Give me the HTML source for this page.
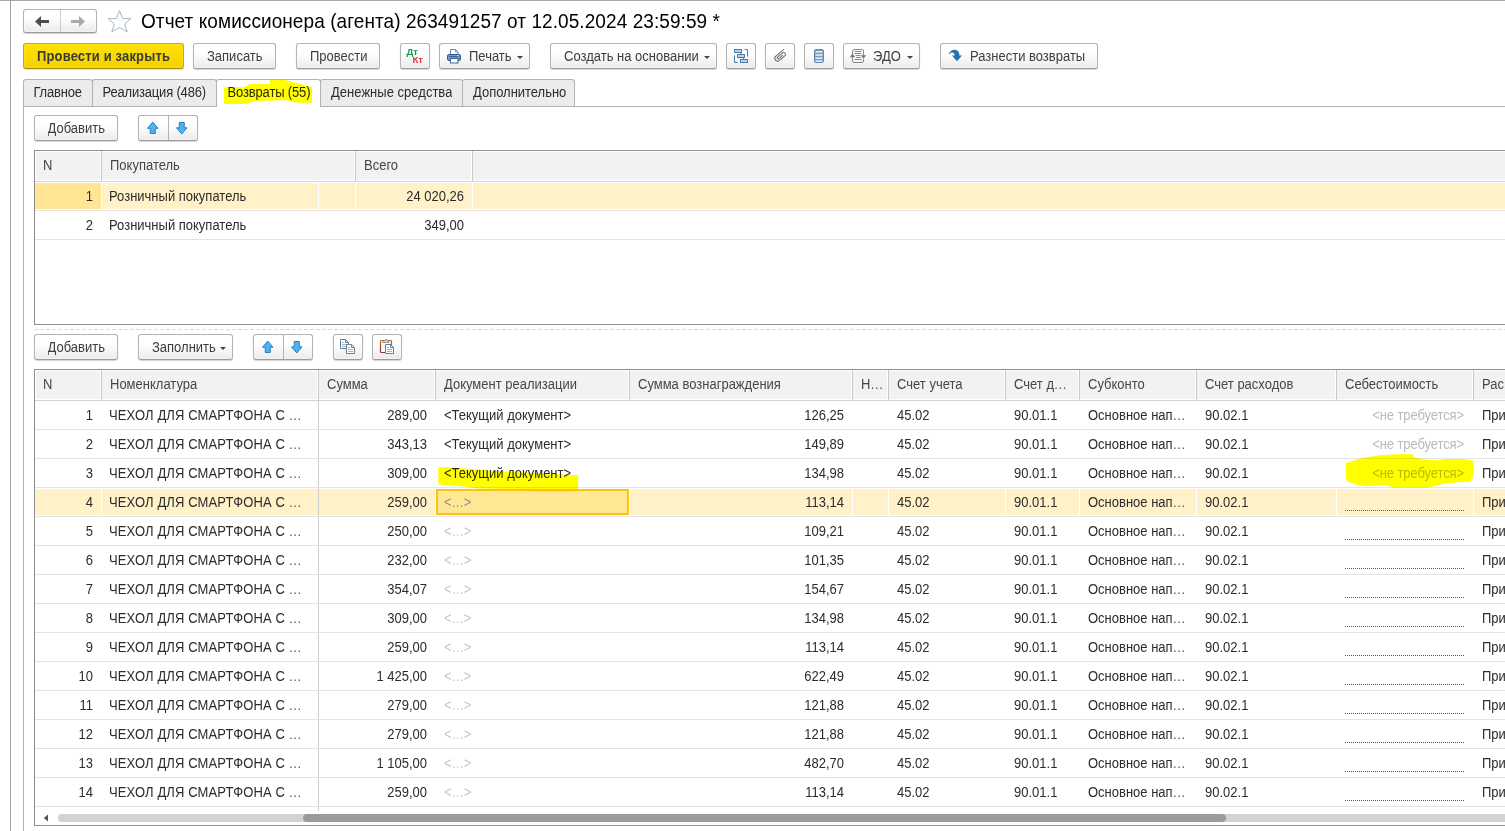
<!DOCTYPE html><html lang="ru"><head><meta charset="utf-8"><title>Отчет комиссионера (агента)</title><style>
*{box-sizing:border-box;margin:0;padding:0}
html,body{width:1505px;height:831px;overflow:hidden;background:#fff}
body{position:relative;font-family:"Liberation Sans",sans-serif;font-size:13px;color:#333}
.a{position:absolute}
.t{position:absolute;white-space:nowrap;line-height:15px;height:15px;font-size:13px;transform:scaleY(1.075);transform-origin:0 12px;color:#2c2c2c;overflow:hidden}
.t.r{text-align:right}
.d{letter-spacing:0.6px;margin-left:0.4px;color:#555}
.t.g{color:#bababa}
.t.b{color:#3e3e3e}
.btn{position:absolute;height:26px;border:1px solid #b3b3b3;border-bottom-color:#9b9b9b;border-radius:3px;background:linear-gradient(#ffffff 35%,#ebebeb 100%);box-shadow:0 1px 1px rgba(0,0,0,.18),inset 0 0 0 1px rgba(255,255,255,.4)}
.btn.y{background:linear-gradient(#ffe200,#f3d200);border-color:#c9ab00;border-bottom-color:#a88e00;box-shadow:0 1px 1px rgba(0,0,0,.13),inset 0 0 0 1px rgba(255,255,255,.12)}
.ic{position:absolute;overflow:visible}
.tab{position:absolute;top:79px;height:28px;border:1px solid #b2b2b2;border-bottom:none;border-radius:3px 3px 0 0;background:#ececec}
.tab.act{background:#fff;z-index:3}
.hl{position:absolute;left:0;top:0;mix-blend-mode:multiply;z-index:20;pointer-events:none}
.hc{position:absolute;background:#f2f2f2;height:28px}
.vl{position:absolute;width:1px;background:#c9c9c9}
.hr{position:absolute;height:1px;background:#e4e4e4}
.sel{position:absolute;height:26px;background:#fff2c8}
.dot{position:absolute;height:1px;background:repeating-linear-gradient(90deg,#f01818 0,#f01818 1px,transparent 1px,transparent 2px)}
</style></head><body>
<div class="a" style="left:0;top:0;width:1505px;height:1px;background:#a6a6a6"></div>
<div class="a" style="left:10px;top:0;width:1px;height:831px;background:#a0a0a0"></div>
<div class="btn" style="left:23px;top:9px;width:74px;height:24px"></div>
<div class="a" style="left:60px;top:10px;width:1px;height:22px;background:#cdcdcd"></div>
<svg class="ic" style="left:23px;top:9px" width="74" height="24" viewBox="0 0 74 24"><path d="M12 12.5 L18 7 V11 H26 V14 H18 V18 Z" fill="#4d4d4d"/><path d="M62 12.5 L56 7 V11 H48 V14 H56 V18 Z" fill="#a9a9a9"/></svg>
<svg class="ic" style="left:0;top:0" width="140" height="40" viewBox="0 0 140 40"><polygon points="119.5,10.6 122.6,18.6 130.8,18.6 124.6,24.0 127.2,31.8 119.5,27.4 111.8,31.8 114.4,24.0 108.2,18.6 116.4,18.6" fill="#fff" stroke="#a9b5c1" stroke-width="1"/></svg>
<div class="a" style="left:141px;top:10px;font-size:19px;line-height:24px;height:24px;color:#000;white-space:nowrap;letter-spacing:0.075px;transform:scaleY(1.07);transform-origin:0 21px">Отчет комиссионера (агента) 263491257 от 12.05.2024 23:59:59 *</div>
<div class="btn y" style="left:23px;top:43px;width:161px;height:26px"></div>
<div class="t " style="left:37px;top:49px;font-weight:bold;color:#3a3a3a;letter-spacing:0.15px">Провести и закрыть</div>
<div class="btn " style="left:193px;top:43px;width:83px;height:26px"></div>
<div class="t b" style="left:207px;top:49px;">Записать</div>
<div class="btn " style="left:296px;top:43px;width:84px;height:26px"></div>
<div class="t b" style="left:310px;top:49px;">Провести</div>
<div class="btn " style="left:400px;top:43px;width:30px;height:26px"></div>
<div class="a" style="left:406.5px;top:47px;font-size:9.5px;font-weight:bold;color:#0f9a48;line-height:10px">Дт</div>
<div class="a" style="left:412.5px;top:55px;font-size:9.5px;font-weight:bold;color:#e03540;line-height:10px">Кт</div>
<div class="btn " style="left:439px;top:43px;width:91px;height:26px"></div>
<div class="t b" style="left:469px;top:49px;">Печать</div>
<svg class="ic" style="left:517px;top:56px" width="6" height="3" viewBox="0 0 6 3"><path d="M0 0H6L3 3Z" fill="#444"/></svg>
<div class="btn " style="left:550px;top:43px;width:167px;height:26px"></div>
<div class="t b" style="left:564px;top:49px;">Создать на основании</div>
<svg class="ic" style="left:704px;top:56px" width="6" height="3" viewBox="0 0 6 3"><path d="M0 0H6L3 3Z" fill="#444"/></svg>
<div class="btn " style="left:726px;top:43px;width:30px;height:26px"></div>
<div class="btn " style="left:765px;top:43px;width:30px;height:26px"></div>
<div class="btn " style="left:804px;top:43px;width:30px;height:26px"></div>
<div class="btn " style="left:843px;top:43px;width:77px;height:26px"></div>
<div class="t b" style="left:873px;top:49px;">ЭДО</div>
<svg class="ic" style="left:907px;top:56px" width="6" height="3" viewBox="0 0 6 3"><path d="M0 0H6L3 3Z" fill="#444"/></svg>
<div class="btn " style="left:940px;top:43px;width:158px;height:26px"></div>
<div class="t b" style="left:970px;top:49px;">Разнести возвраты</div>
<svg class="ic" style="left:0;top:0" width="1505" height="80" viewBox="0 0 1505 80"><path d="M450.5 54.5V49.5H455.5L458 52V54.5" fill="#fff" stroke="#6a86a6" stroke-width="1"/><path d="M455.5 49.5V52H458" fill="none" stroke="#6a86a6" stroke-width="0.8"/><rect x="447.5" y="54.5" width="13" height="6" rx="1.5" fill="#6f98c6" stroke="#2d5a8c" stroke-width="1"/><rect x="449" y="56" width="10" height="1" fill="#3a6494"/><rect x="457" y="55.2" width="1.6" height="1" fill="#e8f0fa"/><rect x="450.5" y="58.5" width="7.5" height="4.5" fill="#fff" stroke="#3f6896" stroke-width="1"/><g fill="#bcd2e8" stroke="#4581b3" stroke-width="1"><rect x="734.5" y="49.5" width="7" height="3"/><rect x="737.5" y="54.5" width="7" height="3"/><rect x="740.5" y="59.5" width="7" height="3"/></g><g fill="none" stroke="#4581b3" stroke-width="1"><path d="M740.5 52.5V54.5M743.5 57.5V59.5M744.5 49.5H747.5V56.5M734.5 55.5V62.5H737.5"/></g><g transform="translate(780.4,56) rotate(50)" fill="none" stroke="#6a6a6a" stroke-width="1" stroke-linecap="round"><path d="M-2.8 -6.6 V3.6 a2.8 2.8 0 0 0 5.6 0 V-3.4 a1.9 1.9 0 0 0 -3.8 0 V3 a0.95 0.95 0 0 0 1.9 0 V-2.2"/></g><rect x="814.5" y="49.5" width="9" height="13" rx="1.5" fill="#7a9ec2" stroke="#5f89b0" stroke-width="1"/><rect x="815.5" y="51" width="7" height="1.6" fill="#e1ecf7"/><rect x="815.5" y="54.2" width="7" height="1.6" fill="#e1ecf7"/><rect x="815.5" y="57.4" width="7" height="1.6" fill="#e1ecf7"/><rect x="815.5" y="60.4" width="7" height="1.6" fill="#e1ecf7"/><g fill="none" stroke="#8a8a8a" stroke-width="1"><path d="M852.5 55V51a1.5 1.5 0 0 1 1.5 -1.5H862a1.5 1.5 0 0 1 1.5 1.5V56"/><path d="M863.5 59V61a1.5 1.5 0 0 1 -1.5 1.5H854a1.5 1.5 0 0 1 -1.5 -1.5V56.5"/><path d="M854.5 51.5H861.5M854.5 53.5H861.5M855.5 55.5H860.5M856 57.5H861M854.5 59.5H861.5"/></g><path d="M849.7 57.3L852.5 53.7L855.3 57.3Z" fill="#777"/><path d="M860.7 55.2L863.5 58.8L866.3 55.2Z" fill="#777"/><path transform="translate(948,49)" d="M0.8 5 C1.5 2.5 4 0.8 6.5 0.8 C9.5 0.8 11.6 3 11.4 6.4 H14 L9 12.2 L4 6.4 H6.7 C6.6 4.5 5.3 3.3 3.8 3.4 C2.8 3.5 2 4.2 1.4 5.3 Z" fill="#2571b2"/></svg>
<div class="a" style="left:23px;top:106px;width:1482px;height:1px;background:#b2b2b2;z-index:2"></div>
<div class="a" style="left:23px;top:106px;width:1px;height:725px;background:#b2b2b2"></div>
<div class="tab" style="left:23px;width:70px"></div>
<div class="t " style="left:33.5px;top:85px;z-index:4;letter-spacing:-0.19px">Главное</div>
<div class="tab" style="left:92px;width:125px"></div>
<div class="t " style="left:102.6px;top:85px;z-index:4;letter-spacing:-0.19px">Реализация (486)</div>
<div class="tab act" style="left:216px;width:105px"></div>
<div class="t " style="left:227.5px;top:85px;z-index:4;letter-spacing:-0.15px">Возвраты (55)</div>
<div class="tab" style="left:320px;width:143px"></div>
<div class="t " style="left:331px;top:85px;z-index:4;letter-spacing:0.02px">Денежные средства</div>
<div class="tab" style="left:462px;width:113px"></div>
<div class="t " style="left:473px;top:85px;z-index:4;letter-spacing:-0.02px">Дополнительно</div>
<div class="btn " style="left:34px;top:115px;width:84px;height:26px"></div>
<div class="t b" style="left:47.5px;top:121px;">Добавить</div>
<div class="btn " style="left:138px;top:115px;width:60px;height:26px"></div>
<div class="a" style="left:168px;top:116px;width:1px;height:24px;background:#b3b3b3"></div>
<svg class="ic" style="left:147px;top:121px" width="12" height="14" viewBox="0 0 12 14"><path d="M5.75 1 L11 7.3 H8.25 V12.5 H3.25 V7.3 H0.5 Z" fill="#4db3ef" stroke="#2a7fbc" stroke-width="1" stroke-linejoin="miter"/></svg>
<svg class="ic" style="left:176px;top:121px" width="12" height="14" viewBox="0 0 12 14"><path d="M5.75 13 L11 6.8 H8.25 V1.5 H3.25 V6.8 H0.5 Z" fill="#4db3ef" stroke="#2a7fbc" stroke-width="1" stroke-linejoin="miter"/></svg>
<div class="a" style="left:34px;top:150px;width:1471px;height:175px;border:1px solid #8f8f8f;border-right:none"></div>
<div class="hc" style="left:36px;top:152px;width:64px"></div>
<div class="t " style="left:43px;top:158px;width:56px;color:#474747">N</div>
<div class="hc" style="left:102px;top:152px;width:252px"></div>
<div class="vl" style="left:101px;top:151px;height:30px"></div>
<div class="t " style="left:110px;top:158px;width:244px;color:#474747">Покупатель</div>
<div class="hc" style="left:356px;top:152px;width:115px"></div>
<div class="vl" style="left:355px;top:151px;height:30px"></div>
<div class="t " style="left:364px;top:158px;width:107px;color:#474747">Всего</div>
<div class="hc" style="left:473px;top:152px;width:1036px"></div>
<div class="vl" style="left:472px;top:151px;height:30px"></div>
<div class="t " style="left:481px;top:158px;width:1028px;color:#474747"></div>
<div class="hr" style="left:35px;top:181px;width:1470px;background:#d2d2d2"></div>
<div class="sel" style="left:35px;top:183px;width:66px;background:#ffe594"></div>
<div class="sel" style="left:102px;top:183px;width:216px;background:#fff2c8"></div>
<div class="sel" style="left:319px;top:183px;width:36px;background:#fff2c8"></div>
<div class="sel" style="left:356px;top:183px;width:116px;background:#fff2c8"></div>
<div class="sel" style="left:473px;top:183px;width:1032px;background:#fff2c8"></div>
<div class="hr" style="left:35px;top:210px;width:1470px"></div>
<div class="hr" style="left:35px;top:239px;width:1470px"></div>
<div class="t r" style="left:35px;top:189px;width:58px;">1</div>
<div class="t " style="left:109px;top:189px;">Розничный покупатель</div>
<div class="t r" style="left:356px;top:189px;width:108px;">24 020,26</div>
<div class="t r" style="left:35px;top:218px;width:58px;">2</div>
<div class="t " style="left:109px;top:218px;">Розничный покупатель</div>
<div class="t r" style="left:356px;top:218px;width:108px;">349,00</div>
<div class="a" style="left:34px;top:329px;width:1471px;height:1px;background:repeating-linear-gradient(90deg,#d9d9d9 0,#d9d9d9 4px,transparent 4px,transparent 6px)"></div>
<div class="btn " style="left:34px;top:334px;width:84px;height:26px"></div>
<div class="t b" style="left:47.5px;top:340px;">Добавить</div>
<div class="btn " style="left:138px;top:334px;width:95px;height:26px"></div>
<div class="t b" style="left:152px;top:340px;">Заполнить</div>
<svg class="ic" style="left:220px;top:347px" width="6" height="3" viewBox="0 0 6 3"><path d="M0 0H6L3 3Z" fill="#444"/></svg>
<div class="btn " style="left:253px;top:334px;width:60px;height:26px"></div>
<div class="a" style="left:283px;top:335px;width:1px;height:24px;background:#b3b3b3"></div>
<svg class="ic" style="left:262px;top:340px" width="12" height="14" viewBox="0 0 12 14"><path d="M5.75 1 L11 7.3 H8.25 V12.5 H3.25 V7.3 H0.5 Z" fill="#4db3ef" stroke="#2a7fbc" stroke-width="1" stroke-linejoin="miter"/></svg>
<svg class="ic" style="left:291px;top:340px" width="12" height="14" viewBox="0 0 12 14"><path d="M5.75 13 L11 6.8 H8.25 V1.5 H3.25 V6.8 H0.5 Z" fill="#4db3ef" stroke="#2a7fbc" stroke-width="1" stroke-linejoin="miter"/></svg>
<div class="btn " style="left:333px;top:334px;width:30px;height:26px"></div>
<div class="btn " style="left:372px;top:334px;width:30px;height:26px"></div>
<svg class="ic" style="left:0;top:300px" width="420" height="70" viewBox="0 300 420 70"><path d="M340.5 339.5H345.5L348.5 342.5V348.5H340.5Z" fill="#fff" stroke="#6a8099" stroke-width="1"/><path d="M345.5 339.5V342.5H348.5" fill="none" stroke="#6a8099" stroke-width="1"/><path d="M342 342.5H344M342 344.5H347M342 346.5H347" stroke="#a3b4c6" stroke-width="1" fill="none"/><path d="M346.5 344.5H351.5L354.5 347.5V353.5H346.5Z" fill="#fff" stroke="#6a8099" stroke-width="1"/><path d="M351.5 344.5V347.5H354.5" fill="none" stroke="#6a8099" stroke-width="1"/><path d="M348 347.5H350M348 349.5H353M348 351.5H353" stroke="#a3b4c6" stroke-width="1" fill="none"/><defs><linearGradient id="cb" x1="0" y1="0" x2="0" y2="1"><stop offset="0" stop-color="#c06a1c"/><stop offset="1" stop-color="#8a3a2c"/></linearGradient></defs><rect x="380.5" y="340.5" width="11" height="12" rx="0.8" fill="#fff" stroke="url(#cb)" stroke-width="1.2"/><path d="M382.5 342.5Q382.5 341 384.5 341Q385 339.3 386 339.3Q387 339.3 387.5 341Q389.5 341 389.5 342.5Z" fill="#d8d8d8" stroke="#8c8c8c" stroke-width="0.8"/><path d="M385.5 344.5H390.5L393.5 347.5V353.5H385.5Z" fill="#fff" stroke="#6a8099" stroke-width="1"/><path d="M390.5 344.5V347.5H393.5" fill="none" stroke="#6a8099" stroke-width="1"/><path d="M387 347.5H389M387 349.5H392M387 351.5H392" stroke="#a3b4c6" stroke-width="1" fill="none"/></svg>
<div class="a" style="left:34px;top:369px;width:1471px;height:457px;border:1px solid #8f8f8f;border-right:none"></div>
<div class="hc" style="left:36px;top:371px;width:64px"></div>
<div class="t " style="left:43px;top:377px;width:56px;color:#474747">N</div>
<div class="hc" style="left:102px;top:371px;width:215px"></div>
<div class="vl" style="left:101px;top:370px;height:30px"></div>
<div class="t " style="left:110px;top:377px;width:207px;color:#474747">Номенклатура</div>
<div class="hc" style="left:319px;top:371px;width:115px"></div>
<div class="vl" style="left:318px;top:370px;height:30px"></div>
<div class="t " style="left:327px;top:377px;width:107px;color:#474747">Сумма</div>
<div class="hc" style="left:436px;top:371px;width:192px"></div>
<div class="vl" style="left:435px;top:370px;height:30px"></div>
<div class="t " style="left:444px;top:377px;width:184px;color:#474747">Документ реализации</div>
<div class="hc" style="left:630px;top:371px;width:221px"></div>
<div class="vl" style="left:629px;top:370px;height:30px"></div>
<div class="t " style="left:638px;top:377px;width:213px;color:#474747">Сумма вознаграждения</div>
<div class="hc" style="left:853px;top:371px;width:34px"></div>
<div class="vl" style="left:852px;top:370px;height:30px"></div>
<div class="t " style="left:861px;top:377px;width:26px;color:#474747">Н<span class="d">...</span></div>
<div class="hc" style="left:889px;top:371px;width:115px"></div>
<div class="vl" style="left:888px;top:370px;height:30px"></div>
<div class="t " style="left:897px;top:377px;width:107px;color:#474747">Счет учета</div>
<div class="hc" style="left:1006px;top:371px;width:72px"></div>
<div class="vl" style="left:1005px;top:370px;height:30px"></div>
<div class="t " style="left:1014px;top:377px;width:64px;color:#474747">Счет д<span class="d">...</span></div>
<div class="hc" style="left:1080px;top:371px;width:115px"></div>
<div class="vl" style="left:1079px;top:370px;height:30px"></div>
<div class="t " style="left:1088px;top:377px;width:107px;color:#474747">Субконто</div>
<div class="hc" style="left:1197px;top:371px;width:138px"></div>
<div class="vl" style="left:1196px;top:370px;height:30px"></div>
<div class="t " style="left:1205px;top:377px;width:130px;color:#474747">Счет расходов</div>
<div class="hc" style="left:1337px;top:371px;width:135px"></div>
<div class="vl" style="left:1336px;top:370px;height:30px"></div>
<div class="t " style="left:1345px;top:377px;width:127px;color:#474747">Себестоимость</div>
<div class="hc" style="left:1474px;top:371px;width:35px"></div>
<div class="vl" style="left:1473px;top:370px;height:30px"></div>
<div class="t " style="left:1482px;top:377px;width:27px;color:#474747">Рас</div>
<div class="hr" style="left:35px;top:400px;width:1470px;background:#d2d2d2"></div>
<div class="vl" style="left:318px;top:401px;height:410px;background:#cfcfcf"></div>
<div class="hr" style="left:35px;top:429px;width:1470px"></div>
<div class="t r" style="left:35px;top:408px;width:58px;">1</div>
<div class="t " style="left:109px;top:408px;letter-spacing:0.12px">ЧЕХОЛ ДЛЯ СМАРТФОНА С <span class="d">...</span></div>
<div class="t r" style="left:319px;top:408px;width:108px;">289,00</div>
<div class="t " style="left:444px;top:408px;">&lt;Текущий документ&gt;</div>
<div class="t r" style="left:630px;top:408px;width:214px;">126,25</div>
<div class="t " style="left:897px;top:408px;">45.02</div>
<div class="t " style="left:1014px;top:408px;">90.01.1</div>
<div class="t " style="left:1088px;top:408px;">Основное нап<span class="d">...</span></div>
<div class="t " style="left:1205px;top:408px;">90.02.1</div>
<div class="t r g" style="left:1337px;top:408px;width:127px;letter-spacing:-0.1px">&lt;не требуется&gt;</div>
<div class="t " style="left:1482px;top:408px;width:23px;">При</div>
<div class="hr" style="left:35px;top:458px;width:1470px"></div>
<div class="t r" style="left:35px;top:437px;width:58px;">2</div>
<div class="t " style="left:109px;top:437px;letter-spacing:0.12px">ЧЕХОЛ ДЛЯ СМАРТФОНА С <span class="d">...</span></div>
<div class="t r" style="left:319px;top:437px;width:108px;">343,13</div>
<div class="t " style="left:444px;top:437px;">&lt;Текущий документ&gt;</div>
<div class="t r" style="left:630px;top:437px;width:214px;">149,89</div>
<div class="t " style="left:897px;top:437px;">45.02</div>
<div class="t " style="left:1014px;top:437px;">90.01.1</div>
<div class="t " style="left:1088px;top:437px;">Основное нап<span class="d">...</span></div>
<div class="t " style="left:1205px;top:437px;">90.02.1</div>
<div class="t r g" style="left:1337px;top:437px;width:127px;letter-spacing:-0.1px">&lt;не требуется&gt;</div>
<div class="t " style="left:1482px;top:437px;width:23px;">При</div>
<div class="hr" style="left:35px;top:487px;width:1470px"></div>
<div class="t r" style="left:35px;top:466px;width:58px;">3</div>
<div class="t " style="left:109px;top:466px;letter-spacing:0.12px">ЧЕХОЛ ДЛЯ СМАРТФОНА С <span class="d">...</span></div>
<div class="t r" style="left:319px;top:466px;width:108px;">309,00</div>
<div class="t " style="left:444px;top:466px;">&lt;Текущий документ&gt;</div>
<div class="t r" style="left:630px;top:466px;width:214px;">134,98</div>
<div class="t " style="left:897px;top:466px;">45.02</div>
<div class="t " style="left:1014px;top:466px;">90.01.1</div>
<div class="t " style="left:1088px;top:466px;">Основное нап<span class="d">...</span></div>
<div class="t " style="left:1205px;top:466px;">90.02.1</div>
<div class="t r g" style="left:1337px;top:466px;width:127px;letter-spacing:-0.1px">&lt;не требуется&gt;</div>
<div class="t " style="left:1482px;top:466px;width:23px;">При</div>
<div class="sel" style="left:35px;top:489px;width:66px"></div>
<div class="sel" style="left:102px;top:489px;width:216px"></div>
<div class="sel" style="left:319px;top:489px;width:116px"></div>
<div class="sel" style="left:436px;top:489px;width:193px"></div>
<div class="sel" style="left:630px;top:489px;width:222px"></div>
<div class="sel" style="left:853px;top:489px;width:35px"></div>
<div class="sel" style="left:889px;top:489px;width:116px"></div>
<div class="sel" style="left:1006px;top:489px;width:73px"></div>
<div class="sel" style="left:1080px;top:489px;width:116px"></div>
<div class="sel" style="left:1197px;top:489px;width:139px"></div>
<div class="sel" style="left:1337px;top:489px;width:136px"></div>
<div class="sel" style="left:1474px;top:489px;width:31px"></div>
<div class="a" style="left:436px;top:489px;width:193px;height:26px;background:#ffe794;border:2px solid #f9c414"></div>
<div class="hr" style="left:35px;top:516px;width:1470px"></div>
<div class="t r" style="left:35px;top:495px;width:58px;">4</div>
<div class="t " style="left:109px;top:495px;letter-spacing:0.12px">ЧЕХОЛ ДЛЯ СМАРТФОНА С <span class="d">...</span></div>
<div class="t r" style="left:319px;top:495px;width:108px;">259,00</div>
<div class="t g" style="left:444px;top:495px;letter-spacing:0.3px;color:#8f8f8f">&lt;...&gt;</div>
<div class="t r" style="left:630px;top:495px;width:214px;">113,14</div>
<div class="t " style="left:897px;top:495px;">45.02</div>
<div class="t " style="left:1014px;top:495px;">90.01.1</div>
<div class="t " style="left:1088px;top:495px;">Основное нап<span class="d">...</span></div>
<div class="t " style="left:1205px;top:495px;">90.02.1</div>
<div class="dot" style="left:1345px;top:510px;width:119px"></div>
<div class="t " style="left:1482px;top:495px;width:23px;">При</div>
<div class="hr" style="left:35px;top:545px;width:1470px"></div>
<div class="t r" style="left:35px;top:524px;width:58px;">5</div>
<div class="t " style="left:109px;top:524px;letter-spacing:0.12px">ЧЕХОЛ ДЛЯ СМАРТФОНА С <span class="d">...</span></div>
<div class="t r" style="left:319px;top:524px;width:108px;">250,00</div>
<div class="t g" style="left:444px;top:524px;letter-spacing:0.3px;color:#c6c6c6">&lt;...&gt;</div>
<div class="t r" style="left:630px;top:524px;width:214px;">109,21</div>
<div class="t " style="left:897px;top:524px;">45.02</div>
<div class="t " style="left:1014px;top:524px;">90.01.1</div>
<div class="t " style="left:1088px;top:524px;">Основное нап<span class="d">...</span></div>
<div class="t " style="left:1205px;top:524px;">90.02.1</div>
<div class="dot" style="left:1345px;top:539px;width:119px"></div>
<div class="t " style="left:1482px;top:524px;width:23px;">При</div>
<div class="hr" style="left:35px;top:574px;width:1470px"></div>
<div class="t r" style="left:35px;top:553px;width:58px;">6</div>
<div class="t " style="left:109px;top:553px;letter-spacing:0.12px">ЧЕХОЛ ДЛЯ СМАРТФОНА С <span class="d">...</span></div>
<div class="t r" style="left:319px;top:553px;width:108px;">232,00</div>
<div class="t g" style="left:444px;top:553px;letter-spacing:0.3px;color:#c6c6c6">&lt;...&gt;</div>
<div class="t r" style="left:630px;top:553px;width:214px;">101,35</div>
<div class="t " style="left:897px;top:553px;">45.02</div>
<div class="t " style="left:1014px;top:553px;">90.01.1</div>
<div class="t " style="left:1088px;top:553px;">Основное нап<span class="d">...</span></div>
<div class="t " style="left:1205px;top:553px;">90.02.1</div>
<div class="dot" style="left:1345px;top:568px;width:119px"></div>
<div class="t " style="left:1482px;top:553px;width:23px;">При</div>
<div class="hr" style="left:35px;top:603px;width:1470px"></div>
<div class="t r" style="left:35px;top:582px;width:58px;">7</div>
<div class="t " style="left:109px;top:582px;letter-spacing:0.12px">ЧЕХОЛ ДЛЯ СМАРТФОНА С <span class="d">...</span></div>
<div class="t r" style="left:319px;top:582px;width:108px;">354,07</div>
<div class="t g" style="left:444px;top:582px;letter-spacing:0.3px;color:#c6c6c6">&lt;...&gt;</div>
<div class="t r" style="left:630px;top:582px;width:214px;">154,67</div>
<div class="t " style="left:897px;top:582px;">45.02</div>
<div class="t " style="left:1014px;top:582px;">90.01.1</div>
<div class="t " style="left:1088px;top:582px;">Основное нап<span class="d">...</span></div>
<div class="t " style="left:1205px;top:582px;">90.02.1</div>
<div class="dot" style="left:1345px;top:597px;width:119px"></div>
<div class="t " style="left:1482px;top:582px;width:23px;">При</div>
<div class="hr" style="left:35px;top:632px;width:1470px"></div>
<div class="t r" style="left:35px;top:611px;width:58px;">8</div>
<div class="t " style="left:109px;top:611px;letter-spacing:0.12px">ЧЕХОЛ ДЛЯ СМАРТФОНА С <span class="d">...</span></div>
<div class="t r" style="left:319px;top:611px;width:108px;">309,00</div>
<div class="t g" style="left:444px;top:611px;letter-spacing:0.3px;color:#c6c6c6">&lt;...&gt;</div>
<div class="t r" style="left:630px;top:611px;width:214px;">134,98</div>
<div class="t " style="left:897px;top:611px;">45.02</div>
<div class="t " style="left:1014px;top:611px;">90.01.1</div>
<div class="t " style="left:1088px;top:611px;">Основное нап<span class="d">...</span></div>
<div class="t " style="left:1205px;top:611px;">90.02.1</div>
<div class="dot" style="left:1345px;top:626px;width:119px"></div>
<div class="t " style="left:1482px;top:611px;width:23px;">При</div>
<div class="hr" style="left:35px;top:661px;width:1470px"></div>
<div class="t r" style="left:35px;top:640px;width:58px;">9</div>
<div class="t " style="left:109px;top:640px;letter-spacing:0.12px">ЧЕХОЛ ДЛЯ СМАРТФОНА С <span class="d">...</span></div>
<div class="t r" style="left:319px;top:640px;width:108px;">259,00</div>
<div class="t g" style="left:444px;top:640px;letter-spacing:0.3px;color:#c6c6c6">&lt;...&gt;</div>
<div class="t r" style="left:630px;top:640px;width:214px;">113,14</div>
<div class="t " style="left:897px;top:640px;">45.02</div>
<div class="t " style="left:1014px;top:640px;">90.01.1</div>
<div class="t " style="left:1088px;top:640px;">Основное нап<span class="d">...</span></div>
<div class="t " style="left:1205px;top:640px;">90.02.1</div>
<div class="dot" style="left:1345px;top:655px;width:119px"></div>
<div class="t " style="left:1482px;top:640px;width:23px;">При</div>
<div class="hr" style="left:35px;top:690px;width:1470px"></div>
<div class="t r" style="left:35px;top:669px;width:58px;">10</div>
<div class="t " style="left:109px;top:669px;letter-spacing:0.12px">ЧЕХОЛ ДЛЯ СМАРТФОНА С <span class="d">...</span></div>
<div class="t r" style="left:319px;top:669px;width:108px;">1 425,00</div>
<div class="t g" style="left:444px;top:669px;letter-spacing:0.3px;color:#c6c6c6">&lt;...&gt;</div>
<div class="t r" style="left:630px;top:669px;width:214px;">622,49</div>
<div class="t " style="left:897px;top:669px;">45.02</div>
<div class="t " style="left:1014px;top:669px;">90.01.1</div>
<div class="t " style="left:1088px;top:669px;">Основное нап<span class="d">...</span></div>
<div class="t " style="left:1205px;top:669px;">90.02.1</div>
<div class="dot" style="left:1345px;top:684px;width:119px"></div>
<div class="t " style="left:1482px;top:669px;width:23px;">При</div>
<div class="hr" style="left:35px;top:719px;width:1470px"></div>
<div class="t r" style="left:35px;top:698px;width:58px;">11</div>
<div class="t " style="left:109px;top:698px;letter-spacing:0.12px">ЧЕХОЛ ДЛЯ СМАРТФОНА С <span class="d">...</span></div>
<div class="t r" style="left:319px;top:698px;width:108px;">279,00</div>
<div class="t g" style="left:444px;top:698px;letter-spacing:0.3px;color:#c6c6c6">&lt;...&gt;</div>
<div class="t r" style="left:630px;top:698px;width:214px;">121,88</div>
<div class="t " style="left:897px;top:698px;">45.02</div>
<div class="t " style="left:1014px;top:698px;">90.01.1</div>
<div class="t " style="left:1088px;top:698px;">Основное нап<span class="d">...</span></div>
<div class="t " style="left:1205px;top:698px;">90.02.1</div>
<div class="dot" style="left:1345px;top:713px;width:119px"></div>
<div class="t " style="left:1482px;top:698px;width:23px;">При</div>
<div class="hr" style="left:35px;top:748px;width:1470px"></div>
<div class="t r" style="left:35px;top:727px;width:58px;">12</div>
<div class="t " style="left:109px;top:727px;letter-spacing:0.12px">ЧЕХОЛ ДЛЯ СМАРТФОНА С <span class="d">...</span></div>
<div class="t r" style="left:319px;top:727px;width:108px;">279,00</div>
<div class="t g" style="left:444px;top:727px;letter-spacing:0.3px;color:#c6c6c6">&lt;...&gt;</div>
<div class="t r" style="left:630px;top:727px;width:214px;">121,88</div>
<div class="t " style="left:897px;top:727px;">45.02</div>
<div class="t " style="left:1014px;top:727px;">90.01.1</div>
<div class="t " style="left:1088px;top:727px;">Основное нап<span class="d">...</span></div>
<div class="t " style="left:1205px;top:727px;">90.02.1</div>
<div class="dot" style="left:1345px;top:742px;width:119px"></div>
<div class="t " style="left:1482px;top:727px;width:23px;">При</div>
<div class="hr" style="left:35px;top:777px;width:1470px"></div>
<div class="t r" style="left:35px;top:756px;width:58px;">13</div>
<div class="t " style="left:109px;top:756px;letter-spacing:0.12px">ЧЕХОЛ ДЛЯ СМАРТФОНА С <span class="d">...</span></div>
<div class="t r" style="left:319px;top:756px;width:108px;">1 105,00</div>
<div class="t g" style="left:444px;top:756px;letter-spacing:0.3px;color:#c6c6c6">&lt;...&gt;</div>
<div class="t r" style="left:630px;top:756px;width:214px;">482,70</div>
<div class="t " style="left:897px;top:756px;">45.02</div>
<div class="t " style="left:1014px;top:756px;">90.01.1</div>
<div class="t " style="left:1088px;top:756px;">Основное нап<span class="d">...</span></div>
<div class="t " style="left:1205px;top:756px;">90.02.1</div>
<div class="dot" style="left:1345px;top:771px;width:119px"></div>
<div class="t " style="left:1482px;top:756px;width:23px;">При</div>
<div class="hr" style="left:35px;top:806px;width:1470px"></div>
<div class="t r" style="left:35px;top:785px;width:58px;">14</div>
<div class="t " style="left:109px;top:785px;letter-spacing:0.12px">ЧЕХОЛ ДЛЯ СМАРТФОНА С <span class="d">...</span></div>
<div class="t r" style="left:319px;top:785px;width:108px;">259,00</div>
<div class="t g" style="left:444px;top:785px;letter-spacing:0.3px;color:#c6c6c6">&lt;...&gt;</div>
<div class="t r" style="left:630px;top:785px;width:214px;">113,14</div>
<div class="t " style="left:897px;top:785px;">45.02</div>
<div class="t " style="left:1014px;top:785px;">90.01.1</div>
<div class="t " style="left:1088px;top:785px;">Основное нап<span class="d">...</span></div>
<div class="t " style="left:1205px;top:785px;">90.02.1</div>
<div class="dot" style="left:1345px;top:800px;width:119px"></div>
<div class="t " style="left:1482px;top:785px;width:23px;">При</div>
<div class="a" style="left:58px;top:814px;width:1460px;height:8px;border-radius:4px;background:#d3d3d3"></div>
<div class="a" style="left:303px;top:814px;width:923px;height:8px;border-radius:4px;background:#9b9b9b"></div>
<svg class="ic" style="left:43px;top:814px" width="6" height="8" viewBox="0 0 6 8"><path d="M5 0.5V7.5L0.8 4Z" fill="#555"/></svg>
<svg class="hl" width="1505" height="831" viewBox="0 0 1505 831"><polygon points="224.0,87.2 244.3,87.2 249.9,84.0 269.8,84.0 269.8,80.0 285.0,80.0 297.7,83.2 309.7,86.8 312.0,86.8 312.0,102.7 298.5,102.7 286.6,100.3 254.7,101.1 246.7,103.9 224.0,103.9" fill="#ffff00"/><polygon points="438.3,467.3 445.2,466.9 494.8,471.0 564.5,474.5 578.1,475.2 578.1,488.8 573.6,491.6 532.4,491.6 522.7,489.2 476.6,488.5 466.9,486.8 438.3,484.3" fill="#ffff00"/><polygon points="1345.9,462.9 1360.9,458.2 1378.8,455.2 1401.5,454.0 1413.5,454.6 1413.5,457.0 1424.3,459.4 1436.2,460.5 1444.6,459.1 1463.7,459.1 1473.3,461.1 1473.3,476.7 1470.9,477.3 1470.9,481.5 1444.6,483.3 1437.4,485.7 1426.7,487.5 1393.2,487.5 1384.8,485.1 1364.5,486.3 1356.1,484.5 1347.7,481.5 1345.9,479.1" fill="#ffff00"/></svg>
</body></html>
